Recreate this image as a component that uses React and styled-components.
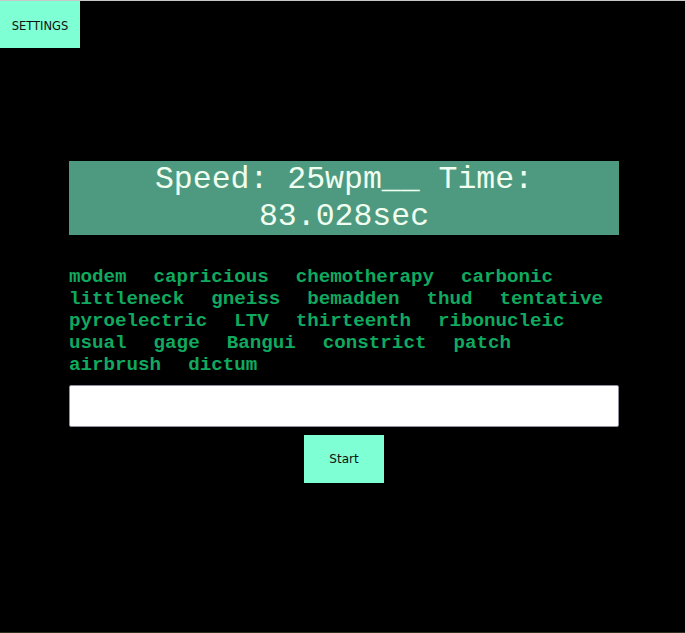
import React from 'react';
import styled, { createGlobalStyle } from 'styled-components';

const words = [
  'modem', 'capricious', 'chemotherapy', 'carbonic', 'littleneck', 'gneiss',
  'bemadden', 'thud', 'tentative', 'pyroelectric', 'LTV', 'thirteenth',
  'ribonucleic', 'usual', 'gage', 'Bangui', 'constrict', 'patch', 'airbrush', 'dictum',
];

function App() {
  return (
    <Page>
      <GlobalStyle />
      <SettingsButton>SETTINGS</SettingsButton>
      <Main>
        <Stats>Speed: 25wpm__ Time: 83.028sec</Stats>
        <WordList>
          {words.map((w, i) => (
            <React.Fragment key={i}>
              <Word>{w}</Word>{' '}
            </React.Fragment>
          ))}
        </WordList>
        <TypeInput type="text" />
        <StartButton>Start</StartButton>
      </Main>
    </Page>
  );
}

const GlobalStyle = createGlobalStyle`
    html, body {
        margin:0;
        background:#000;
    }
`;
const Page = styled.div`
    background:#000;
    height:631px;
    border-top:1px solid #c8c8c8;
    border-bottom:1px solid #2e2e1e;
`;
const SettingsButton = styled.button`
    display:block;
    width:80px;
    height:47px;
    background:#7fffd4;
    border:none;
    padding:2px 0 0;
    font-family:"DejaVu Sans", sans-serif;
    font-size:11.5px;
    color:#111;
`;
const Main = styled.div`
    width:550px;
    margin:113px 0 0 69px;
    display:flex;
    flex-direction:column;
    align-items:center;
`;
const Stats = styled.div`
    width:100%;
    background:#4e9a80;
    color:#f0fff0;
    font-family:"Liberation Mono", monospace;
    font-size:31.5px;
    line-height:37px;
    text-align:center;
`;
const WordList = styled.div`
    width:100%;
    margin-top:31px;
    font-family:"Liberation Mono", monospace;
    font-weight:bold;
    font-size:19.2px;
    line-height:22px;
    word-spacing:15.5px;
    color:#10a95f;
`;
const Word = styled.span`
    word-spacing:normal;
`;
const TypeInput = styled.input`
    width:100%;
    box-sizing:border-box;
    height:42px;
    margin-top:9px;
    border:1px solid #8f8f9d;
    border-radius:2px;
    background:#fff;
`;
const StartButton = styled.button`
    width:80px;
    height:48px;
    margin-top:8px;
    background:#7fffd4;
    border:none;
    font-family:"DejaVu Sans", sans-serif;
    font-size:12px;
    color:#111;
`;

export default App;
